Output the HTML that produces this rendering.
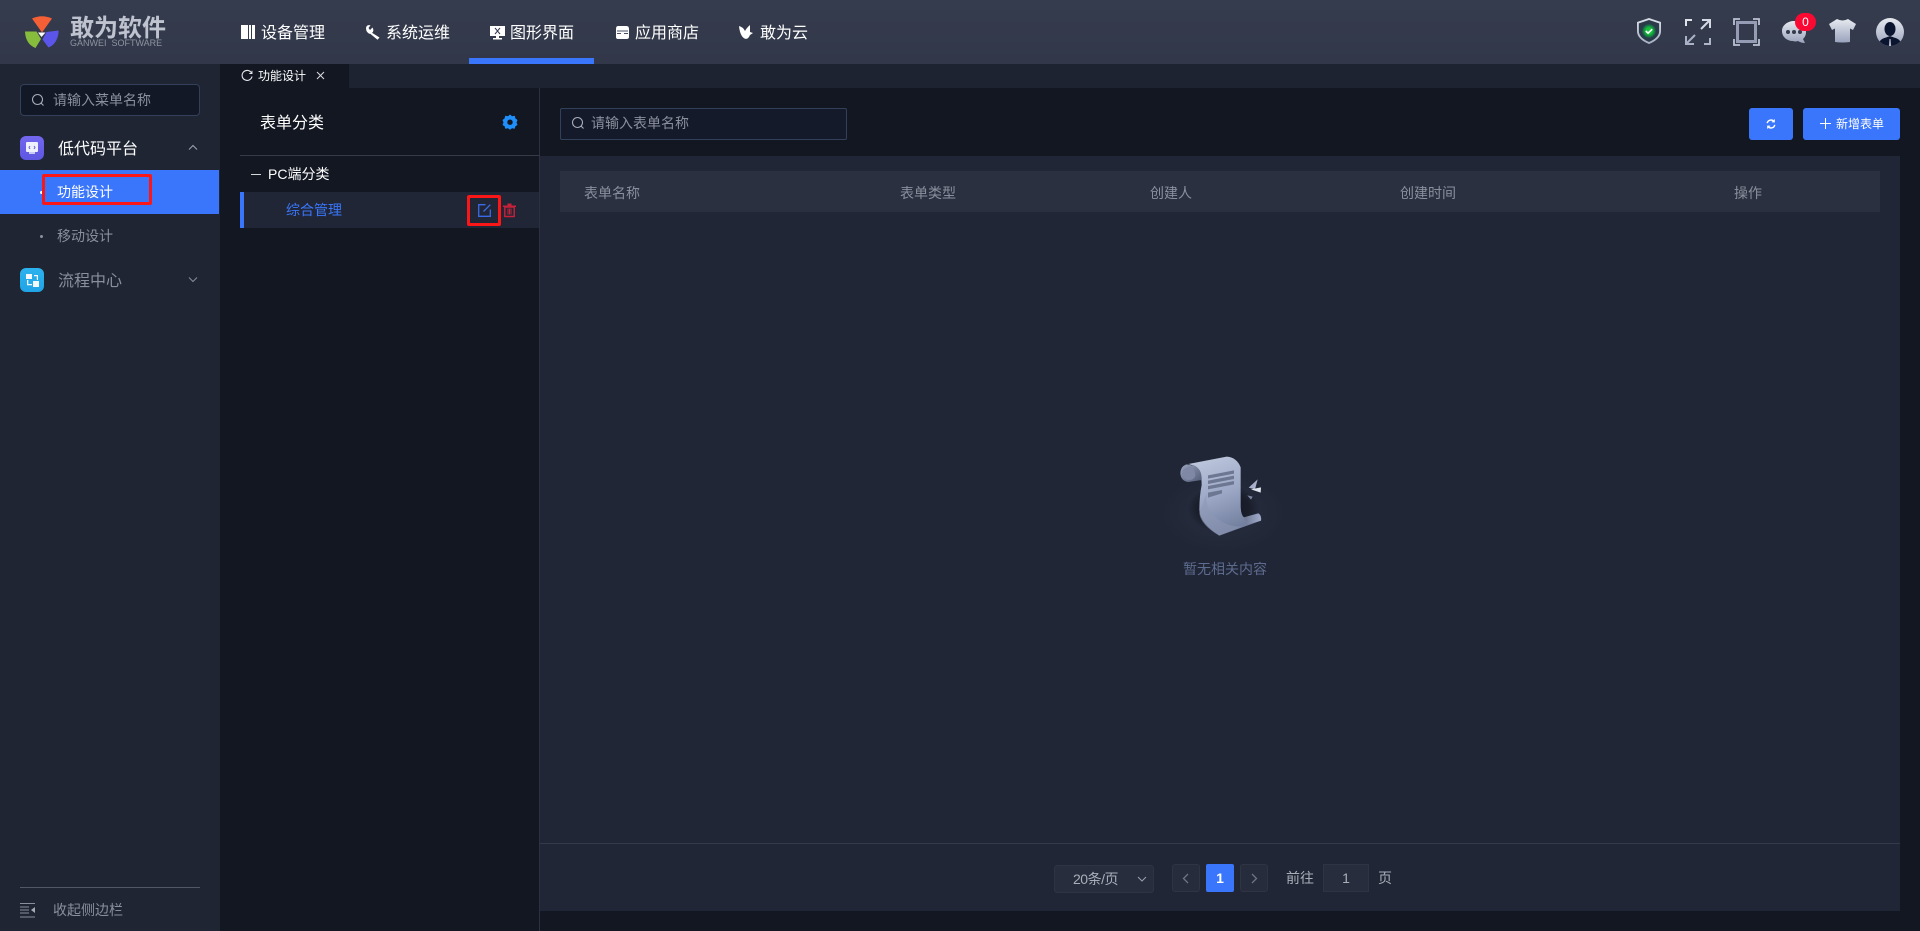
<!DOCTYPE html>
<html lang="zh-CN"><head><meta charset="utf-8"><title>敢为软件</title>
<style>
*{box-sizing:border-box}
html,body{margin:0;padding:0;width:1920px;height:931px;overflow:hidden;background:#131722;font-family:"Liberation Sans","Noto Sans CJK SC",sans-serif}
.a{position:absolute}
.t{position:absolute;white-space:nowrap;line-height:20px;height:20px}
svg{position:absolute;display:block;overflow:visible}
</style></head><body>
<div class="a" style="left:0;top:0;width:1920px;height:931px;overflow:hidden">

<!-- header -->
<div class="a" style="left:0;top:0;width:1920px;height:64px;background:linear-gradient(#353c4e,#323849)"></div>
<svg style="left:20px;top:10px" width="50" height="46" viewBox="20 10 50 46">
<path d="M32 18.500Q42 14 52 18.500L42 32.500Z" fill="#f55f36"/>
<path d="M25 31.500H36.500L41 39L35.500 48Q25.500 44 25 31.500Z" fill="#86bd3d"/>
<path d="M58.500 30.500V33Q57 44 48.500 47.500L42.500 39.500L46.500 32Z" fill="#5b55ea"/>
<path d="M38 32.500H45.500L41.500 37Z" fill="#fff"/>
</svg>
<div class="t" style="left:70px;top:17px;font-size:24px;line-height:24px;height:24px;font-weight:700;color:#bfc3cf">敢为软件</div>
<div class="t" style="left:70px;top:38px;font-size:9px;line-height:11px;height:11px;color:#8e92a0;white-space:pre">GANWEI  SOFTWARE</div>

<!-- nav icons + text -->
<svg style="left:241px;top:25px" width="14" height="14" viewBox="0 0 14 14"><path d="M0 0H7V14H0ZM8 0H10V14H8ZM11 0H14V14H11Z" fill="#fff"/></svg>
<div class="t" style="left:261px;top:24px;font-size:16px;color:#fff">设备管理</div>
<svg style="left:365px;top:25px" width="15" height="15" viewBox="0 0 15 15"><path d="M1 3Q1.500 -.5 5.500 .3L3.500 3L5 5L7.500 2.500Q9.500 6 7 7.800L14.500 12.500L12.500 14.800L5.500 9Q1 8 1 3Z" fill="#fff"/></svg>
<div class="t" style="left:386px;top:24px;font-size:16px;color:#fff">系统运维</div>
<svg style="left:490px;top:26px" width="15" height="14" viewBox="0 0 15 14"><path d="M0 0H15V10H9V12H12V13.500H3V12H6V10H0Z" fill="#fff"/><path d="M5 2L7.500 5L10 2M5 8L7.500 5L10 8" stroke="#333a4c" fill="none" stroke-width="1"/></svg>
<div class="t" style="left:510px;top:24px;font-size:16px;color:#fff">图形界面</div>
<div class="a" style="left:469px;top:58px;width:125px;height:6px;background:#3a76fb"></div>
<svg style="left:615px;top:25px" width="15" height="15" viewBox="0 0 15 15"><path d="M3 1H11.500Q14 1 14 4V12Q14 14 11.500 14H3Q1 14 1 12V4Q1 1 3 1Z" fill="#fff"/><path d="M2 6H13M2 8.500H6M9 8.500H13" stroke="#4a5064" stroke-width="1"/></svg>
<div class="t" style="left:635px;top:24px;font-size:16px;color:#fff">应用商店</div>
<svg style="left:739px;top:25px" width="17" height="15" viewBox="0 0 17 15"><path d="M0 1Q4 2 6 6Q7.500 3 11 0V7L14 8L11 10Q9 15 5.500 13.500Q1 11 0 1Z" fill="#fff"/></svg>
<div class="t" style="left:760px;top:24px;font-size:16px;color:#fff">敢为云</div>

<!-- right header icons -->
<svg style="left:1637px;top:18px" width="24" height="26" viewBox="0 0 26 28">
<defs><linearGradient id="g1" x1="0" y1="0" x2="0" y2="1"><stop offset="0" stop-color="#d9dde6"/><stop offset="1" stop-color="#aab2c8"/></linearGradient>
<radialGradient id="g2"><stop offset=".45" stop-color="#16c33a"/><stop offset="1" stop-color="#1d4f4a"/></radialGradient></defs>
<path d="M13 1L25 5V14Q25 22 13 27Q1 22 1 14V5Z" fill="#2a3a48" stroke="url(#g1)" stroke-width="2"/>
<circle cx="13" cy="14" r="7.500" fill="url(#g2)"/><path d="M9.500 14L12 16.300L16.500 12" stroke="#fff" stroke-width="1.700" fill="none"/></svg>
<svg style="left:1684px;top:18px" width="28" height="28" viewBox="0 0 28 28">
<defs><linearGradient id="g3" x1="0" y1="0" x2="0" y2="1"><stop offset="0" stop-color="#e6e9ef"/><stop offset="1" stop-color="#9aa3bd"/></linearGradient></defs>
<g fill="none" stroke-width="2"><path d="M2 8V2H8" stroke="#dfe2e9"/><path d="M20 26H26V20" stroke="#b0b6ca"/>
<path d="M18 2H26V10M26 2L17 11" stroke="#d5d9e3"/><path d="M2 18V26H10M2 26L11 17" stroke="#abb2c8"/></g></svg>
<svg style="left:1733px;top:18px" width="27" height="28" viewBox="0 0 27 28" fill="none">
<rect x="4.500" y="4.500" width="18" height="19" stroke="#959cb3" stroke-width="3"/>
<path d="M1 7V1H7M20 1H26V7M1 21V27H7M20 27H26V21" stroke="#bcc2d2" stroke-width="1.800"/></svg>
<svg style="left:1782px;top:20px" width="26" height="26" viewBox="0 0 26 26">
<path d="M12 1C18 1 24 5 24 12C24 15 23 17 21 19L23 23Q19 23 16 21Q13 22 11 21C5 21 0 17 0 11C0 5 6 1 12 1Z" fill="url(#g3)"/>
<circle cx="6" cy="12" r="2" fill="#343b4d"/><circle cx="12" cy="12" r="2" fill="#343b4d"/><circle cx="18" cy="12" r="2" fill="#343b4d"/></svg>
<div class="a" style="left:1795px;top:13px;width:21px;height:18px;border-radius:9px;background:#fa0a32;color:#fff;font-size:12px;line-height:18px;text-align:center">0</div>
<svg style="left:1829px;top:19px" width="27" height="24" viewBox="0 0 27 24"><path d="M8 0Q13.500 3 19 0L27 5L24 11L21 9.500V23Q13.500 24 6 23V9.500L3 11L0 5Z" fill="url(#g3)"/></svg>
<svg style="left:1876px;top:18px" width="28" height="28" viewBox="0 0 28 28">
<defs><clipPath id="c1"><circle cx="14" cy="14" r="14"/></clipPath></defs>
<circle cx="14" cy="14" r="14" fill="url(#g3)"/>
<g clip-path="url(#c1)"><ellipse cx="14" cy="11" rx="5.500" ry="7" fill="#0c1530"/><path d="M2 28Q3 21 10 19.500L14 18L18 19.500Q25 21 26 28Z" fill="#0c1530"/><path d="M13.500 21H14.500L15 28H13Z" fill="#c5cad8"/></g></svg>

<!-- sidebar -->
<div class="a" style="left:0;top:64px;width:220px;height:867px;background:#1f2533"></div>
<div class="a" style="left:20px;top:84px;width:180px;height:32px;border:1px solid #33405a;border-radius:4px;background:#131826"></div>
<svg style="left:31px;top:93px" width="14" height="14" viewBox="0 0 14 14" fill="none" stroke="#a6abb8" stroke-width="1.100"><circle cx="6.500" cy="6.500" r="5"/><path d="M10 10L12.500 12.500"/></svg>
<div class="t" style="left:53px;top:90px;font-size:14px;color:#8a8f9d">请输入菜单名称</div>

<div class="a" style="left:20px;top:136px;width:24px;height:24px;border-radius:6px;background:linear-gradient(#7367ee,#5d57e2)"></div>
<svg style="left:25px;top:141px" width="14" height="14" viewBox="0 0 14 14"><rect x="1" y="1" width="12" height="10" rx="1" fill="#eef0fb"/><rect x="4" y="11" width="6" height="2" fill="#c8ccef"/><path d="M5 5L4 6.500L5 8M9 5L10 6.500L9 8" stroke="#6a60e8" fill="none"/></svg>
<div class="t" style="left:58px;top:140px;font-size:16px;color:#fff">低代码平台</div>
<svg style="left:188px;top:144px" width="10" height="7" viewBox="0 0 10 7" fill="none" stroke="#a0a5b2" stroke-width="1"><path d="M1 5.500L5 1.500L9 5.500"/></svg>

<div class="a" style="left:0;top:170px;width:219px;height:44px;background:#3a76fb"></div>
<div class="a" style="left:40px;top:191px;width:3px;height:3px;border-radius:50%;background:#fff"></div>
<div class="a" style="left:42px;top:174px;width:110px;height:31px;border:3px solid #fb1717;border-radius:2px"></div>
<div class="t" style="left:57px;top:182px;font-size:14px;color:#fff">功能设计</div>
<div class="a" style="left:40px;top:235px;width:3px;height:3px;border-radius:50%;background:#8a8f9d"></div>
<div class="t" style="left:57px;top:226px;font-size:14px;color:#8a8f9d">移动设计</div>

<div class="a" style="left:20px;top:268px;width:24px;height:24px;border-radius:6px;background:linear-gradient(#2cb2ee,#20a4e6)"></div>
<svg style="left:26px;top:274px" width="13" height="13" viewBox="0 0 13 13" fill="#f2f8fd"><rect x="0" y="0" width="6" height="5"/><rect x="7" y="7" width="6" height="6"/><path d="M8 1H12V6H10.800V2.200H8ZM1 6H2.300V10H6V11.300H1Z"/></svg>
<div class="t" style="left:58px;top:272px;font-size:16px;color:#8a8f9d">流程中心</div>
<svg style="left:188px;top:276px" width="10" height="7" viewBox="0 0 10 7" fill="none" stroke="#8a8f9d" stroke-width="1"><path d="M1 1.500L5 5.500L9 1.500"/></svg>

<div class="a" style="left:20px;top:887px;width:180px;height:1px;background:#535864"></div>
<svg style="left:20px;top:903px" width="16" height="15" viewBox="0 0 16 15" fill="none" stroke="#8a8f9d"><path d="M0 .5H15M0 7H9M0 10H9M0 14H15M0 4H9" stroke-width="1"/><path d="M15 4L11 7L15 10Z" fill="#a5aab5" stroke="none"/></svg>
<div class="t" style="left:53px;top:900px;font-size:14px;color:#8a8f9d">收起侧边栏</div>

<!-- tab bar -->
<div class="a" style="left:220px;top:64px;width:1700px;height:24px;background:#1d2331"></div>
<div class="a" style="left:220px;top:64px;width:129px;height:24px;background:#131722"></div>
<svg style="left:241px;top:70px" width="12" height="12" viewBox="0 0 12 12" fill="none" stroke="#e6e7ea" stroke-width="1.100"><path d="M10.500 3A5 5 0 1 0 11 6.500"/><path d="M11 .8V3.500H8.300" stroke-width=".9"/></svg>
<div class="t" style="left:258px;top:66px;font-size:12px;color:#fff">功能设计</div>
<svg style="left:316px;top:71px" width="9" height="9" viewBox="0 0 9 9" stroke="#dcdde1" stroke-width="1"><path d="M1 1L8 8M8 1L1 8"/></svg>

<!-- left panel -->
<div class="a" style="left:220px;top:88px;width:320px;height:843px;background:#131722"></div>
<div class="a" style="left:539px;top:88px;width:1px;height:843px;background:#2b3140"></div>
<div class="t" style="left:260px;top:114px;font-size:16px;color:#fff">表单分类</div>
<svg style="left:502px;top:114px" width="16" height="16" viewBox="0 0 16 16"><path d="M8 .5L10 2.200L12.700 1.800L13.400 4.400L15.500 6L14.500 8.500L15.500 11L13.400 12.300L12.700 14.700L10 14.300L8 15.800L6 14.300L3.300 14.700L2.600 12.300L.5 11L1.500 8.500L.5 6L2.600 4.400L3.300 1.800L6 2.200Z" fill="#1f8ffb"/><circle cx="8" cy="8.200" r="2.700" fill="#131722"/></svg>
<div class="a" style="left:240px;top:155px;width:300px;height:1px;background:#353a48"></div>
<div class="a" style="left:251px;top:174px;width:10px;height:1px;background:#d5d6da"></div>
<div class="t" style="left:268px;top:164px;font-size:14px;color:#fff">PC端分类</div>
<div class="a" style="left:240px;top:192px;width:299px;height:36px;background:#202635"></div>
<div class="a" style="left:240px;top:192px;width:4px;height:36px;background:#3a76fb"></div>
<div class="t" style="left:286px;top:200px;font-size:14px;color:#3a76fb">综合管理</div>
<div class="a" style="left:467px;top:195px;width:34px;height:31px;border:3px solid #fb1717;border-radius:2px"></div>
<svg style="left:478px;top:204px" width="13" height="13" viewBox="0 0 13 13" fill="none" stroke="#3a6ae8" stroke-width="1.300"><path d="M7.500 .7H.7V12.300H12.300V5.500M12.300 .7L5.500 7.500"/></svg>
<svg style="left:503px;top:203px" width="13" height="14" viewBox="0 0 13 14"><path d="M0 2.500H13V4H0ZM4.500 .5H8.500V2.500H4.500Z" fill="#c9213a"/><path d="M1.800 4H11.200V13.500H1.800Z" fill="none" stroke="#c9213a" stroke-width="1.400"/><path d="M5 5.500V11.500M8 5.500V11.500M6.500 5.500V11.500" stroke="#c9213a" stroke-width="1"/></svg>

<!-- right top -->
<div class="a" style="left:560px;top:108px;width:287px;height:32px;border:1px solid #33405a;border-radius:2px;background:#151a2a"></div>
<svg style="left:571px;top:116px" width="14" height="14" viewBox="0 0 14 14" fill="none" stroke="#a6abb8" stroke-width="1.100"><circle cx="6.500" cy="6.500" r="5"/><path d="M10 10L12.500 12.500"/></svg>
<div class="t" style="left:591px;top:113px;font-size:14px;color:#8a8f9d">请输入表单名称</div>
<div class="a" style="left:1749px;top:108px;width:44px;height:32px;border-radius:3px;background:#3a76fb"></div>
<svg style="left:1766px;top:119px" width="10" height="10" viewBox="0 0 12 12" fill="none" stroke="#fff" stroke-width="1.700"><path d="M1.500 5A4.500 4.500 0 0 1 9.500 3M10.500 7A4.500 4.500 0 0 1 2.500 9"/><path d="M10 .5V3.500H7M2 11.500V8.500H5" stroke-width="1.200"/></svg>
<div class="a" style="left:1803px;top:108px;width:97px;height:32px;border-radius:3px;background:#3a76fb"></div>
<svg style="left:1820px;top:118px" width="11" height="11" viewBox="0 0 11 11" stroke="#fff" stroke-width="1"><path d="M5.500 0V11M0 5.500H11"/></svg>
<div class="t" style="left:1836px;top:114px;font-size:12px;color:#fff">新增表单</div>

<!-- content panel -->
<div class="a" style="left:540px;top:156px;width:1360px;height:755px;background:#202635"></div>
<div class="a" style="left:560px;top:171px;width:1320px;height:41px;background:#2a3040"></div>
<div class="t" style="left:584px;top:183px;font-size:14px;color:#8a8f9d">表单名称</div>
<div class="t" style="left:900px;top:183px;font-size:14px;color:#8a8f9d">表单类型</div>
<div class="t" style="left:1150px;top:183px;font-size:14px;color:#8a8f9d">创建人</div>
<div class="t" style="left:1400px;top:183px;font-size:14px;color:#8a8f9d">创建时间</div>
<div class="t" style="left:1734px;top:183px;font-size:14px;color:#8a8f9d">操作</div>

<!-- empty illustration -->
<svg style="left:1120px;top:430px" width="200" height="160" viewBox="0 0 600 480">
<defs>
<radialGradient id="h1"><stop offset="0" stop-color="#282f41"/><stop offset="1" stop-color="#202635"/></radialGradient>
<radialGradient id="h2"><stop offset="0" stop-color="#12151f"/><stop offset=".7" stop-color="#1a1e2b"/><stop offset="1" stop-color="#252b3c"/></radialGradient>
<linearGradient id="h3" x1="0" y1="0" x2=".35" y2="1"><stop offset="0" stop-color="#c2cbe0"/><stop offset=".55" stop-color="#9ca8c6"/><stop offset="1" stop-color="#74809f"/></linearGradient>
<linearGradient id="h4" x1="0" y1="0" x2="1" y2="1"><stop offset="0" stop-color="#9aa5c0"/><stop offset="1" stop-color="#525b75"/></linearGradient>
<linearGradient id="h5" x1="0" y1="0" x2="1" y2="0"><stop offset="0" stop-color="#6e7894"/><stop offset="1" stop-color="#a1accb"/></linearGradient>
</defs>
<ellipse cx="310" cy="250" rx="190" ry="120" fill="url(#h1)"/>
<ellipse cx="310" cy="235" rx="110" ry="75" fill="url(#h2)"/>
<path d="M205 102L320 80Q350 82 362 112L362 225Q362 255 372 262L415 250Q425 255 423 272L298 317Q240 280 238 240Q238 200 245 165Q245 120 225 108Z" fill="url(#h3)"/>
<path d="M238 250Q242 285 298 317L365 290Q310 290 275 250Q255 225 260 190Z" fill="#8d98b5" opacity=".55"/>
<path d="M200 103Q182 108 181 130Q183 153 205 156L245 150Q246 118 225 108Z" fill="url(#h4)"/>
<path d="M190 118Q182 135 196 148Q218 155 226 138Q224 112 205 110Z" fill="#7f89a6"/>
<path d="M372 262L415 250Q425 256 423 272L380 285Z" fill="url(#h5)"/>
<g fill="#6d7791"><path d="M264 136L342 121V131L264 146Z"/><path d="M264 152L342 137V147L264 162Z"/><path d="M264 168L342 153V163L264 178Z"/><path d="M264 188L306 180V190L264 203Z"/></g>
<path d="M386 173L413 148L405 178Z" fill="#a7b1c9"/><path d="M393 178L423 172L422 188Z" fill="#dfe3ec"/><path d="M382 196L398 200L393 209Z" fill="#7d87a2"/>
</svg>
<div class="t" style="left:1183px;top:559px;font-size:14px;color:#5d6b8f">暂无相关内容</div>

<!-- pagination -->
<div class="a" style="left:540px;top:843px;width:1360px;height:1px;background:#343a49"></div>
<div class="a" style="left:1054px;top:865px;width:100px;height:28px;border:1px solid #2e3444;border-radius:3px;background:#272d3d"></div>
<div class="t" style="left:1073px;top:869px;font-size:14px;color:#a9aeb9;letter-spacing:-.5px">20条/页</div>
<svg style="left:1137px;top:876px" width="10" height="7" viewBox="0 0 10 7" fill="none" stroke="#9aa0ad" stroke-width="1"><path d="M1 1L5 5L9 1"/></svg>
<div class="a" style="left:1172px;top:864px;width:28px;height:28px;border:1px solid #2e3444;border-radius:3px;background:#262c3b"></div>
<svg style="left:1182px;top:873px" width="7" height="11" viewBox="0 0 7 11" fill="none" stroke="#6f7482" stroke-width="1.300"><path d="M6 1L1.500 5.500L6 10"/></svg>
<div class="a" style="left:1206px;top:864px;width:28px;height:28px;border-radius:2px;background:#3a76fb;color:#fff;font-size:14px;font-weight:700;line-height:28px;text-align:center">1</div>
<div class="a" style="left:1240px;top:864px;width:28px;height:28px;border:1px solid #2e3444;border-radius:3px;background:#262c3b"></div>
<svg style="left:1251px;top:873px" width="7" height="11" viewBox="0 0 7 11" fill="none" stroke="#6f7482" stroke-width="1.300"><path d="M1 1L5.500 5.500L1 10"/></svg>
<div class="t" style="left:1286px;top:868px;font-size:14px;color:#a9aeb9">前往</div>
<div class="a" style="left:1323px;top:864px;width:46px;height:28px;border:1px solid #2e3444;background:#272d3d;color:#a9aeb9;font-size:14px;line-height:26px;text-align:center">1</div>
<div class="t" style="left:1378px;top:868px;font-size:14px;color:#a9aeb9">页</div>
</div>
</body></html>
